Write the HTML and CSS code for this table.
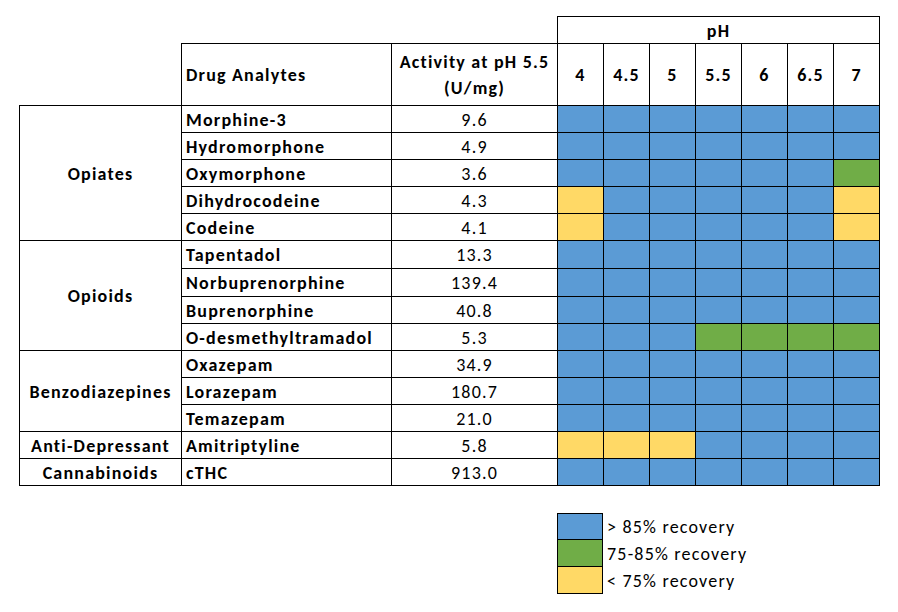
FILE: index.html
```html
<!DOCTYPE html>
<html>
<head>
<meta charset="utf-8">
<link rel="stylesheet" href="styles.css">
</head>
<body>
<div class="page">
<table class="grid">
  <colgroup>
    <col class="c-group"><col class="c-drug"><col class="c-act">
    <col class="c-ph"><col class="c-ph"><col class="c-ph"><col class="c-ph"><col class="c-ph"><col class="c-ph"><col class="c-ph">
  </colgroup>
  <thead>
    <tr class="r-ph">
      <th class="blank" colspan="3"></th>
      <th class="ph" colspan="7">pH</th>
    </tr>
    <tr class="r-head">
      <th class="blank"></th>
      <th class="drug-h">Drug Analytes</th>
      <th class="act-h">Activity at pH 5.5<br>(U/mg)</th>
      <th>4</th><th>4.5</th><th>5</th><th>5.5</th><th>6</th><th>6.5</th><th>7</th>
    </tr>
  </thead>
  <tbody>
    <tr class="r27"><th class="grp" rowspan="5">Opiates</th><td class="drug">Morphine-3</td><td class="act">9.6</td><td class="b"></td><td class="b"></td><td class="b"></td><td class="b"></td><td class="b"></td><td class="b"></td><td class="b"></td></tr>
    <tr class="r27"><td class="drug">Hydromorphone</td><td class="act">4.9</td><td class="b"></td><td class="b"></td><td class="b"></td><td class="b"></td><td class="b"></td><td class="b"></td><td class="b"></td></tr>
    <tr class="r27"><td class="drug">Oxymorphone</td><td class="act">3.6</td><td class="b"></td><td class="b"></td><td class="b"></td><td class="b"></td><td class="b"></td><td class="b"></td><td class="g"></td></tr>
    <tr class="r27"><td class="drug">Dihydrocodeine</td><td class="act">4.3</td><td class="y"></td><td class="b"></td><td class="b"></td><td class="b"></td><td class="b"></td><td class="b"></td><td class="y"></td></tr>
    <tr class="r27"><td class="drug">Codeine</td><td class="act">4.1</td><td class="y"></td><td class="b"></td><td class="b"></td><td class="b"></td><td class="b"></td><td class="b"></td><td class="y"></td></tr>
    <tr class="r28"><th class="grp" rowspan="4">Opioids</th><td class="drug">Tapentadol</td><td class="act">13.3</td><td class="b"></td><td class="b"></td><td class="b"></td><td class="b"></td><td class="b"></td><td class="b"></td><td class="b"></td></tr>
    <tr class="r28"><td class="drug">Norbuprenorphine</td><td class="act">139.4</td><td class="b"></td><td class="b"></td><td class="b"></td><td class="b"></td><td class="b"></td><td class="b"></td><td class="b"></td></tr>
    <tr class="r27"><td class="drug">Buprenorphine</td><td class="act">40.8</td><td class="b"></td><td class="b"></td><td class="b"></td><td class="b"></td><td class="b"></td><td class="b"></td><td class="b"></td></tr>
    <tr class="r27"><td class="drug">O-desmethyltramadol</td><td class="act">5.3</td><td class="b"></td><td class="b"></td><td class="b"></td><td class="g"></td><td class="g"></td><td class="g"></td><td class="g"></td></tr>
    <tr class="r27"><th class="grp" rowspan="3">Benzodiazepines</th><td class="drug">Oxazepam</td><td class="act">34.9</td><td class="b"></td><td class="b"></td><td class="b"></td><td class="b"></td><td class="b"></td><td class="b"></td><td class="b"></td></tr>
    <tr class="r27"><td class="drug">Lorazepam</td><td class="act">180.7</td><td class="b"></td><td class="b"></td><td class="b"></td><td class="b"></td><td class="b"></td><td class="b"></td><td class="b"></td></tr>
    <tr class="r27"><td class="drug">Temazepam</td><td class="act">21.0</td><td class="b"></td><td class="b"></td><td class="b"></td><td class="b"></td><td class="b"></td><td class="b"></td><td class="b"></td></tr>
    <tr class="r27"><th class="grp">Anti-Depressant</th><td class="drug">Amitriptyline</td><td class="act">5.8</td><td class="y"></td><td class="y"></td><td class="y"></td><td class="b"></td><td class="b"></td><td class="b"></td><td class="b"></td></tr>
    <tr class="r27"><th class="grp">Cannabinoids</th><td class="drug">cTHC</td><td class="act">913.0</td><td class="b"></td><td class="b"></td><td class="b"></td><td class="b"></td><td class="b"></td><td class="b"></td><td class="b"></td></tr>
  </tbody>
</table>

<div class="legend">
  <div class="legend-row"><span class="swatch b"></span><span class="legend-label">&gt; 85% recovery</span></div>
  <div class="legend-row"><span class="swatch g"></span><span class="legend-label">75-85% recovery</span></div>
  <div class="legend-row"><span class="swatch y"></span><span class="legend-label">&lt; 75% recovery</span></div>
</div>
</div>
</body>
</html>
```

FILE: styles.css
```css
html, body {
  margin: 0;
  padding: 0;
  background: #ffffff;
}

body {
  font-family: "Carlito", "Open Sans", "Liberation Sans", sans-serif;
  color: #000000;
  font-size: 18px;
  letter-spacing: 1.2px;
}

.page {
  padding: 16px 0 0 19px;
}

.grid {
  border-collapse: collapse;
  table-layout: fixed;
  width: 861px;
}

.c-group { width: 162px; }
.c-drug { width: 210px; }
.c-act { width: 166px; }
.c-ph { width: 46px; }

.grid th,
.grid td {
  border: 1px solid #000000;
  padding: 1px 0 0;
  text-align: center;
  vertical-align: middle;
  line-height: 20px;
  white-space: nowrap;
  overflow: hidden;
}

.grid th {
  font-weight: 700;
}

.grid .blank {
  border: none;
}

.r-ph { height: 27px; }
.r-head { height: 62px; }
.r27 { height: 27px; }
.r28 { height: 28px; }

.grid .drug-h,
.grid .drug {
  text-align: left;
  padding-left: 4px;
  font-weight: 700;
}

.grid .act-h {
  line-height: 26px;
}

.grid .act {
  font-weight: 400;
}

.b { background: #5b9bd5; }
.g { background: #70ad47; }
.y { background: #ffd966; }

.legend {
  margin: 27px 0 0 538px;
  display: flex;
  flex-direction: column;
}

.legend-row {
  display: flex;
  align-items: center;
  height: 27px;
}

.swatch {
  width: 46px;
  height: 27px;
  box-sizing: border-box;
  border: 1px solid #000000;
  border-top-width: 0;
  flex: none;
}

.legend-row:first-child .swatch {
  border-top-width: 1px;
}

.legend-label {
  padding-left: 4px;
  line-height: 20px;
}
```
